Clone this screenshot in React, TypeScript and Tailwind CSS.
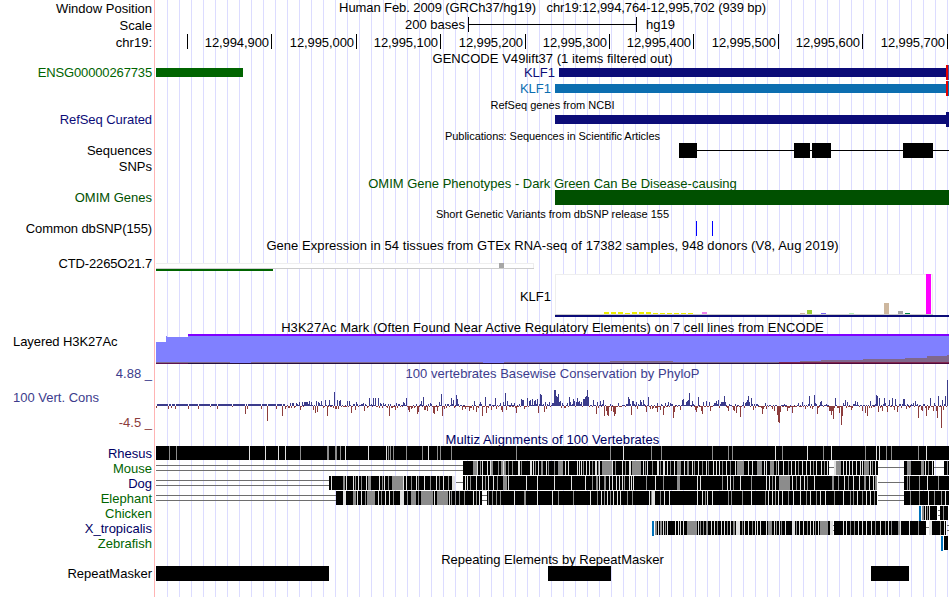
import { ReactNode } from "react";

const LEFT = 156;
const WIDTH = 793;

const NAVY = "#0c0c78";
const GREEN = "#006400";

// "x+w" tokens, width defaults to 1
const parseSpans = (text: string) =>
  text
    .split(" ")
    .filter(Boolean)
    .map((token) => {
      const [x, w] = token.split("+").map(Number);
      return { x, w: w || 1 };
    });

// "x:h" tokens
const parseBars = (text: string) =>
  new Map(text.split(" ").map((token) => token.split(":").map(Number) as [number, number]));

const up = parseBars(
  "290:3 292:3 293:3 296:3 299:4 302:4 304:4 305:4 306:4 307:4 309:5 311:4 316:5 318:4 319:3 321:5 325:6 329:6 334:14 337:6 339:5 340:6 347:5 349:5 356:4 362:2 363:3 369:8 373:8 375:8 378:8 380:3 381:2 383:3 385:2 396:3 403:4 404:3 406:8 " +
    "416:2 421:5 423:9 430:3 431:2 439:4 441:12 451:8 453:6 456:11 457:7 458:2 474:5 480:4 485:9 495:8 500:3 503:4 505:13 507:5 511:3 514:3 521:7 522:6 523:6 527:8 529:5 530:6 532:7 534:5 535:6 537:7 540:12 541:11 545:4 549:4 552:3 553:3 554:16 555:16 556:10 557:9 558:12 559:4 560:5 562:3 567:3 569:9 570:4 573:7 574:5 576:4 577:8 578:4 579:5 581:4 583:7 584:7 585:9 586:10 587:16 588:9 593:6 597:4 600:5 603:6 618:3 628:9 629:7 632:5 633:5 636:4 640:6 641:4 643:6 648:9 657:3 665:3 668:4 670:3 " +
    "682:6 683:7 686:4 687:5 688:6 689:13 692:5 693:2 698:9 703:4 706:5 709:4 714:3 715:3 716:5 718:6 721:4 722:4 723:4 724:10 725:4 743:4 745:3 746:4 747:6 748:10 749:4 751:8 756:2 757:2 765:3 798:3 802:4 809:10 814:11 815:3 820:4 821:5 835:8 843:3 845:6 847:4 855:5 857:4 870:5 876:11 877:10 879:8 884:8 885:3 889:6 892:8 895:7 903:7 904:7 913:3 915:5 923:2 924:2 930:8 934:3 938:10 942:6 945:10 947:26",
);

const down = parseBars(
  "156:2 168:3 171:2 175:3 188:3 198:3 210:1 217:3 232:1 245:8 247:3 261:3 267:15 276:3 282:10 285:3 294:2 300:4 313:4 315:7 317:6 327:10 335:3 336:3 338:3 351:7 355:4 364:5 367:2 389:10 392:2 395:4 408:4 409:6 411:3 412:2 414:2 417:8 418:6 " +
    "424:4 425:4 427:5 433:7 434:8 437:5 442:10 444:3 462:4 465:3 469:5 473:4 476:6 482:10 486:7 491:4 496:3 501:4 502:6 506:4 516:7 524:3 538:7 544:6 546:3 596:8 604:10 606:5 607:9 608:10 611:5 613:6 614:10 615:8 631:9 637:3 646:6 650:3 652:3 657:6 660:4 663:9 673:12 674:6 " +
    "680:4 695:4 696:6 701:5 702:8 710:5 728:5 733:4 734:5 736:7 740:11 753:4 762:8 763:3 766:3 772:3 774:5 777:9 778:16 779:17 780:6 787:5 792:7 805:3 812:3 817:8 829:5 830:5 831:9 832:5 833:13 839:7 841:19 842:10 851:4 862:5 865:7 867:10 878:6 882:5 887:6 894:4 897:6 906:3 918:12 921:4 922:5 926:10 928:4 933:5 937:12 936:5 941:22 943:4",
);

const ticks = [187, 271, 356, 440, 525, 609, 693, 778, 862, 947];
const tickLabels = [
  "12,994,900",
  "12,995,000",
  "12,995,100",
  "12,995,200",
  "12,995,300",
  "12,995,400",
  "12,995,500",
  "12,995,600",
  "12,995,700",
];

const tissues: [number, number, string][] = [
  [604, 2, "#eeee00"],
  [611, 2, "#eeee00"],
  [618, 2, "#eeee00"],
  [625, 1, "#eeee00"],
  [632, 2, "#eeee00"],
  [639, 2, "#eeee00"],
  [646, 2, "#eeee00"],
  [653, 1, "#eeee00"],
  [660, 1, "#eeee00"],
  [667, 1, "#eeee00"],
  [674, 1, "#eeee00"],
  [681, 1, "#eeee00"],
  [688, 1, "#eeee00"],
  [702, 2, "#ee82ee"],
  [800, 1, "#cdb79e"],
  [807, 4, "#9acd32"],
  [821, 1, "#7a67ee"],
  [849, 1, "#b4eeb4"],
  [884, 11, "#cdb79e"],
  [898, 3, "#a6a6a6"],
  [905, 1, "#008b45"],
  [926, 40, "#ff00ff"],
];

type Species = {
  name: string;
  color: string;
  blocks: string;
  double?: string;
  single?: string;
  grey?: string;
  light?: string;
  edge?: number;
};

const species: Species[] = [
  {
    name: "Rhesus",
    color: "text-[#000064]",
    blocks: "156+793",
    grey: "169 176 300 327+2 335+2 340 388 390 393 406 422 437 440 451 516 610 651 661 712 728 732 782 823 865 886 891 918",
    light: "249 265 278 285 345 368 386 428 623 775 807 831 876 879 926",
  },
  {
    name: "Mouse",
    color: "text-[#006400]",
    blocks: "463+366 834+44 904+30 944+5",
    double: "156+307",
    single: "829+5 878+26 934+10",
    grey: "473+4 480 491+2 498 501+5 508 512 521 535 541+2 548 554 558+5 583 592 598 602+10 615 625 632+9 645 652 660 670 677+4 687+2 694 702 708 722 730 737+7 757+5 770+4 776 788 798 813 824 836+5 864+5 872 907+4 921+3 928 947",
    light: "477 482 487 490 503 518+2 530+2 533 538 546 565 568 577 579 581 586 589 595+2 599 612 622 629+2 643 647 657+2 663+2 667 674 684 692 698 706 713 716 719 726 735 748 752 764 766 778 783 791 795 802 806 810 816 821 827 834+2 843 846 849 852 856 860 862 870 875 925 932",
  },
  {
    name: "Dog",
    color: "text-[#000064]",
    blocks: "329+126 463+414 904+45",
    double: "156+173",
    single: "456+7 878+26",
    grey: "343+2 355 361 368+3 382 388 392+11 411 418 430 439 448 470 485 497 503+4 592 596+2 604+2 624 646 663 677+3 722 733 751 772 779+11 796 807 832+2 838 848 864+2 875+2 907 909 919 938",
    light: "331 346 353 358 366 379 384 403 406 416 424 436 443 452+3 465 467 476 482 488 493 508 526 537 554 571 585 599 609 612 616 619 622 629 631 633 655 697 700 727 730 740 766 769 775 792 800 804 814 844 853 859 869 873 927",
  },
  {
    name: "Elephant",
    color: "text-[#006400]",
    blocks: "336+146 487+390 904+45",
    double: "156+180 482+5 878+26",
    grey: "353+3 365 367+8 381 393 407 411+5 418 421+12 437+11 451 455 459 464 476 488 492 496 500 524+2 558 573 597 604 610 627 632 651 660 705 728 731 742 765 775 788 806 816 834 850 853 862 874 910 919 934 941",
    light: "343+3 357 361 378 385 389 400+4 434 449 473 479 514 537 552 590 601 607 613 617 620 649 652+3 664 669 697 702 707 712 751 768 772 778 782 793 800 810 820 825 843 857 866 870 928 945",
  },
  {
    name: "Chicken",
    color: "text-[#006400]",
    blocks: "922+15 940+8",
    double: "938+2",
    grey: "922+2 927 943",
    light: "925 929",
    edge: 919,
  },
  {
    name: "X_tropicalis",
    color: "text-[#000064]",
    blocks: "655+178 834+92 929+17",
    double: "947+2 833+1",
    single: "926+3",
    grey: "655+2 660+2 665 687+10 700 703 706+2 717 727 733+2 742 752 768+4 776 781 796 807 815 820+8 850 854 875 885 891 898+2 918 940",
    light: "658 663 667 675 678 680 683 698 711 714 721 724 730 736+4 744 748 755 757 760 766 774 779 785 792+3 799 803 810 813 818 830+3 843 846 858 862 866 871 880 888 900 909 929+3 944",
    edge: 652,
  },
  {
    name: "Zebrafish",
    color: "text-[#006400]",
    blocks: "944+4",
    edge: 941,
  },
];

function Row({
  height,
  label,
  labelClass = "",
  children,
}: {
  height: string;
  label?: ReactNode;
  labelClass?: string;
  children?: ReactNode;
}) {
  return (
    <div className={`flex ${height}`}>
      <div className={`flex w-[154px] shrink-0 items-center justify-end whitespace-pre pr-[2px] ${labelClass}`}>
        {label}
      </div>
      <div className="w-px shrink-0 bg-[#ffb4b4]" />
      <div className="ml-px w-[793px] shrink-0 bg-[repeating-linear-gradient(to_right,transparent_0_11px,#dcdcff_11px_12px)]">
        {children}
      </div>
    </div>
  );
}

function Title({ children, className = "" }: { children: ReactNode; className?: string }) {
  return (
    <div className={`flex h-full items-center justify-center whitespace-pre ${className}`}>{children}</div>
  );
}

// Drawing area whose coordinates start at the left edge of the tracks
function Track({ height, children }: { height: number; children: ReactNode }) {
  return (
    <svg
      className="block overflow-visible"
      width={WIDTH}
      height={height}
      viewBox={`${LEFT} 0 ${WIDTH} ${height}`}
      shapeRendering="crispEdges"
    >
      {children}
    </svg>
  );
}

function Spans({ spans = "", y = 0, height, fill }: { spans?: string; y?: number; height: number; fill: string }) {
  return (
    <>
      {parseSpans(spans).map(({ x, w }) => (
        <rect key={x} x={x} y={y} width={w} height={height} fill={fill} />
      ))}
    </>
  );
}

function Conservation() {
  const bars = [];
  for (let x = LEFT; x < LEFT + WIDTH - 1; x++) {
    const u = up.get(x);
    const d = down.get(x);
    // columns without a score of their own keep a low signal
    const low = (x * 7919 + ((x * x) % 13)) % 7;
    const rise = u ?? (d ? 0 : x < 286 ? 2 : low < 3 ? 1 : low === 3 ? 2 : 0);
    const fall = d ?? (u || x < 286 ? 0 : low === 6 ? 2 : low > 3 || low === 0 ? 1 : 0);
    if (rise) bars.push(<rect key={`u${x}`} x={x} y={25 - rise} width={1} height={rise} fill="#3c3c8c" />);
    if (fall) bars.push(<rect key={`d${x}`} x={x} y={25} width={1} height={fall} fill="#8c3c3c" />);
  }
  return <Track height={52}>{bars}</Track>;
}

export default function App() {
  return (
    <div className="h-[597px] w-[950px] overflow-hidden bg-white font-['Liberation_Sans',Arial,sans-serif] text-[13px] leading-none text-black">
      <Row height="h-[16px]" label="Window Position">
        <Title className="pb-px tracking-[-0.09px]">
          {"Human Feb. 2009 (GRCh37/hg19)   chr19:12,994,764-12,995,702 (939 bp)"}
        </Title>
      </Row>
      <Row height="h-[16px]" label="Scale" labelClass="pt-[2px]">
        <Track height={16}>
          <text x={465} y={13} textAnchor="end">200 bases</text>
          <rect x={468} y={8} width={169} height={1} />
          <rect x={468} y={1} width={1} height={15} />
          <rect x={636} y={1} width={1} height={15} />
          <text x={646} y={13}>hg19</text>
        </Track>
      </Row>
      <Row height="h-[18px]" label="chr19:" labelClass="pt-[2px]">
        <Track height={18}>
          {ticks.map((x) => (
            <rect key={x} x={x} y={2} width={1} height={15} />
          ))}
          {tickLabels.map((text, i) => (
            <text key={text} className="tracking-[-0.08px]" x={ticks[i + 1] - 2} y={15} textAnchor="end">
              {text}
            </text>
          ))}
        </Track>
      </Row>

      <Row height="h-[15px]">
        <Title className="pt-[2px] tracking-[0.04px]">GENCODE V49lift37 (1 items filtered out)</Title>
      </Row>
      <Row height="h-[16px]" label="ENSG00000267735" labelClass="pb-[2px] tracking-[-0.14px] text-[#006400]">
        <Track height={16}>
          <rect x={156} y={3} width={87} height={9} fill={GREEN} />
          <text x={555} y={12} textAnchor="end" fill={NAVY}>KLF1</text>
          <rect x={559} y={3} width={387} height={9} fill={NAVY} />
          <rect x={946} width={2} height={15} fill="#e60000" />
          <rect x={948} width={1} height={15} fill="#5050a0" />
        </Track>
      </Row>
      <Row height="h-[16px]">
        <Track height={16}>
          <text x={551} y={12} textAnchor="end" fill="#0c6eb0">KLF1</text>
          <rect x={555} y={3} width={391} height={9} fill="#0c6eb0" />
          <rect x={946} width={2} height={15} fill="#e60000" />
          <rect x={948} width={1} height={15} fill="#0c6eb0" />
        </Track>
      </Row>

      <Row height="h-[15px]">
        <Title className="pt-[2px] text-[11px]">RefSeq genes from NCBI</Title>
      </Row>
      <Row height="h-[16px]" label="RefSeq Curated" labelClass="pb-[2px] tracking-[-0.07px] text-[#0c0c78]">
        <Track height={16}>
          <rect x={555} y={3} width={394} height={9} fill={NAVY} />
          <rect x={946} width={3} height={15} fill={NAVY} />
        </Track>
      </Row>

      <Row height="h-[15px]">
        <Title className="pt-[2px] text-[11px] tracking-[-0.06px]">Publications: Sequences in Scientific Articles</Title>
      </Row>
      <Row height="h-[16px]" label="Sequences" labelClass="pb-[2px]">
        <Track height={16}>
          <rect x={679} y={7} width={270} height={1} />
          <Spans spans="679+18 794+16 812+19 903+30" height={15} fill="#000" />
        </Track>
      </Row>
      <Row height="h-[16px]" label="SNPs" labelClass="pb-[2px]" />

      <Row height="h-[15px]">
        <Title className="pt-[2px] text-[#005000]">OMIM Gene Phenotypes - Dark Green Can Be Disease-causing</Title>
      </Row>
      <Row height="h-[16px]" label="OMIM Genes" labelClass="pb-[2px] text-[#005000]">
        <Track height={16}>
          <rect x={555} width={394} height={15} fill="#005000" />
        </Track>
      </Row>

      <Row height="h-[15px]">
        <Title className="pt-[2px] text-[11px]">Short Genetic Variants from dbSNP release 155</Title>
      </Row>
      <Row height="h-[16px]" label="Common dbSNP(155)" labelClass="pb-[2px] tracking-[-0.1px]">
        <Track height={16}>
          <Spans spans="696 712" height={15} fill="#0000ff" />
        </Track>
      </Row>

      <Row height="h-[16px]">
        <Title className="tracking-[0.055px]">
          Gene Expression in 54 tissues from GTEx RNA-seq of 17382 samples, 948 donors (V8, Aug 2019)
        </Title>
      </Row>
      <Row height="h-[20px]" label="CTD-2265O21.7" labelClass="pt-px tracking-[-0.15px]">
        <Track height={20}>
          <rect x={156} y={10} width={378} height={6} fill="#eeeeee" />
          <rect x={156} y={11} width={377} height={4} fill="#fff" />
          <rect x={156} y={15} width={378} height={1} fill="#cccccc" />
          <rect x={499} y={10} width={5} height={5} fill="#a6a6a6" />
          <rect x={156} y={16} width={117} height={2} fill={GREEN} />
        </Track>
      </Row>
      <Row height="h-[46px]">
        <Track height={46}>
          <text x={551} y={28} textAnchor="end">KLF1</text>
          <rect x={555} y={1} width={378} height={41} fill="#eeeeee" />
          <rect x={556} y={2} width={376} height={39} fill="#fff" />
          <rect x={555} y={41} width={378} height={1} fill="#cccccc" />
          {tissues.map(([x, h, fill]) => (
            <rect key={x} x={x} y={41 - h} width={5} height={h} fill={fill} />
          ))}
          <rect x={555} y={42} width={394} height={2} fill={NAVY} />
        </Track>
      </Row>

      <Row height="h-[15px]">
        <Title className="pt-px tracking-[0.06px]">
          H3K27Ac Mark (Often Found Near Active Regulatory Elements) on 7 cell lines from ENCODE
        </Title>
      </Row>
      <Row
        height="h-[32px]"
        label={<span className="mr-auto self-start pl-[13px] pt-px tracking-[-0.07px]">Layered H3K27Ac</span>}
      >
        <Track height={32}>
          <path d="M156 8H166V2H167V3H188V2H949V30H156Z" fill="#8080ff" />
          <rect x={188} width={761} height={2} fill="#8000ff" />
          <path
            d="M156 28H230V29H251V28H483V29H504V28H610V27H673V28H779V28H800V27H821V26H863V25H905V24H927V22H947V21H949V30H156Z"
            fill="#80688c"
          />
          <rect x={779} y={28} width={170} height={1} fill="#802850" />
          <rect x={156} y={29} width={32} height={1} fill="#5c1450" />
          <rect x={188} y={29} width={591} height={1} fill="#28103c" />
          <rect x={779} y={29} width={170} height={1} fill="#500a3c" />
        </Track>
      </Row>

      <Row height="h-[15px]" label="4.88 _" labelClass="text-[#3c3c8c]">
        <Title className="tracking-[0.04px] text-[#3c3c8c]">100 vertebrates Basewise Conservation by PhyloP</Title>
      </Row>
      <Row
        height="h-[52px]"
        label={
          <div className="flex h-full w-full flex-col">
            <span className="pl-[13px] pt-[10px] text-[#3c3c8c]">100 Vert. Cons</span>
            <span className="pt-[12px] text-right text-[#8c3c3c]">-4.5 _</span>
          </div>
        }
      >
        <Conservation />
      </Row>

      <Row height="h-[13px]">
        <Title className="tracking-[0.08px] text-[#000064]">Multiz Alignments of 100 Vertebrates</Title>
      </Row>
      {species.map((item) => (
        <Row key={item.name} height="h-[15px]" label={item.name} labelClass={item.color}>
          <Track height={15}>
            <Spans spans={item.double} y={4} height={1} fill="#6e6e6e" />
            <Spans spans={item.double} y={9} height={1} fill="#6e6e6e" />
            <Spans spans={item.single} y={6} height={1} fill="#6e6e6e" />
            <Spans spans={item.blocks} height={14} fill="#000" />
            <Spans spans={item.grey} height={14} fill="#8c8c8c" />
            <Spans spans={item.light} height={14} fill="#e1e1e1" />
            {item.edge && <rect x={item.edge} width={2} height={15} fill="#0072bc" />}
          </Track>
        </Row>
      ))}

      <Row height="h-[15px]">
        <Title className="pt-[2px]">Repeating Elements by RepeatMasker</Title>
      </Row>
      <Row height="h-[31px]" label={<span className="self-start pt-px">RepeatMasker</span>}>
        <Track height={31}>
          <Spans spans="156+173 548+63 871+38" height={15} fill="#000" />
        </Track>
      </Row>
    </div>
  );
}
